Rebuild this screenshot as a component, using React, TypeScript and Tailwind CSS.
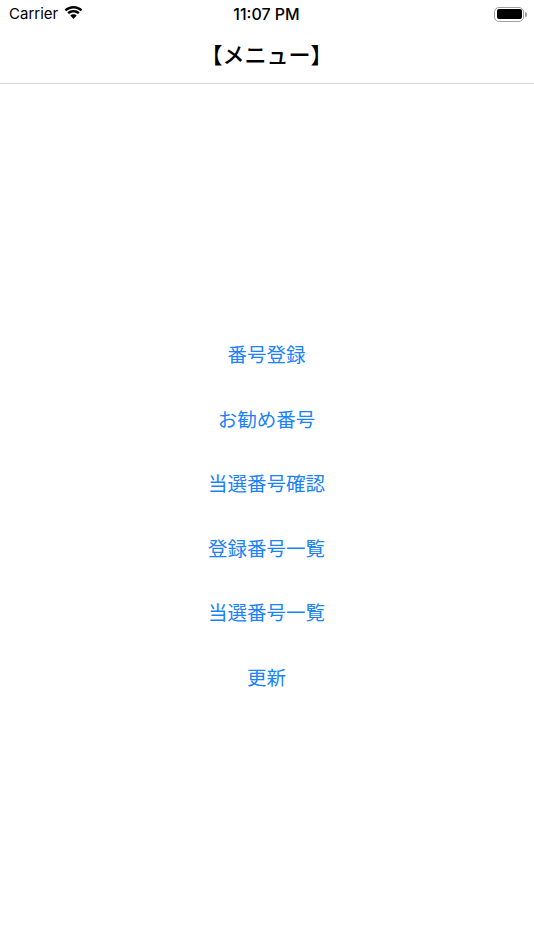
const menuItems = [
  "番号登録",
  "お勧め番号",
  "当選番号確認",
  "登録番号一覧",
  "当選番号一覧",
  "更新",
]

function StatusBar() {
  return (
    <div className="flex h-[28px] items-center justify-between pl-[9px] pr-[7px] font-['Inter',sans-serif] text-black">
      <div className="flex w-[160px] items-center gap-[5px]">
        <span className="text-[15px]">Carrier</span>
        <svg width="21" height="15" viewBox="0 0 19 14" className="mb-[3px]">
          <path d="M9.5 3.2c2.6 0 5 1 6.8 2.7l1.5-1.6C15.6 2.2 12.7 1 9.5 1S3.4 2.2 1.2 4.3l1.5 1.6C4.5 4.2 6.9 3.2 9.5 3.2z" fill="#000" />
          <path d="M9.5 6.9c1.6 0 3 .6 4.2 1.6l1.5-1.6C13.7 5.5 11.7 4.7 9.5 4.7S5.3 5.5 3.8 6.9l1.5 1.6c1.2-1 2.6-1.6 4.2-1.6z" fill="#000" />
          <path d="M9.5 13l3-3.2c-.8-.7-1.9-1.2-3-1.2s-2.2.5-3 1.2z" fill="#000" />
        </svg>
      </div>
      <span className="text-[16px] font-medium">11:07 PM</span>
      <div className="flex w-[163px] items-center justify-end">
        <div className="flex h-[15px] w-[30px] items-center rounded-[5px] border-[1.5px] border-[#a0a0a0] p-[1.5px]">
          <div className="h-full w-full rounded-[2px] bg-black" />
        </div>
        <div className="ml-[1px] h-[5px] w-[1.5px] rounded-r-full bg-[#a0a0a0]" />
      </div>
    </div>
  )
}

export default function App() {
  return (
    <main className="flex h-[950px] flex-col bg-white font-['Noto_Sans_CJK_JP',sans-serif]">
      <StatusBar />
      <header className="flex h-[56px] items-center justify-center border-b border-[#d4d4d6] pb-[4px] pr-[1px] text-[22px] font-medium text-black">
        【メニュー】
      </header>
      <nav className="flex flex-col items-center pr-[1px] pt-[237.8px]">
        {menuItems.map((item) => (
          <button key={item} className="flex h-[64.5px] items-center justify-center text-[19.5px] text-[#1a82fb]">
            {item}
          </button>
        ))}
      </nav>
    </main>
  )
}
